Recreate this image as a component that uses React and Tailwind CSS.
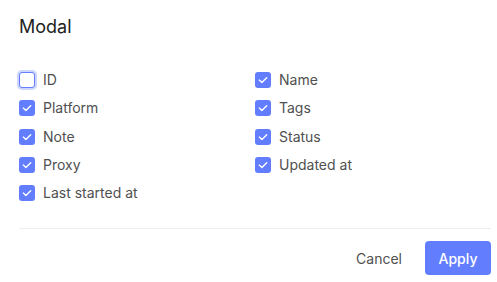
import React from "react";

const left = [
  { label: "ID", checked: false, focus: true },
  { label: "Platform", checked: true },
  { label: "Note", checked: true },
  { label: "Proxy", checked: true },
  { label: "Last started at", checked: true },
];
const right = [
  { label: "Name", checked: true },
  { label: "Tags", checked: true },
  { label: "Status", checked: true },
  { label: "Updated at", checked: true },
];

function Box({ checked, focus }) {
  if (checked) {
    return (
      <span className="flex h-4 w-4 shrink-0 items-center justify-center rounded-[3px] bg-[#627eff]">
        <svg width="10" height="8" viewBox="0 0 10 8" fill="none">
          <path d="M1.3 4.1 L3.9 6.4 L8.7 1.7" stroke="white" strokeWidth="1.4" strokeLinecap="round" strokeLinejoin="round" />
        </svg>
      </span>
    );
  }
  return (
    <span
      className={
        "h-4 w-4 shrink-0 rounded-[3px] border border-[#627eff] bg-white " +
        (focus ? "shadow-[0_0_0_2px_#cdd6ff]" : "")
      }
    />
  );
}

function Item({ label, checked, focus }) {
  return (
    <div className="flex h-[28.25px] items-center gap-2">
      <Box checked={checked} focus={focus} />
      <span className="text-[14px] leading-none text-[#505050]">{label}</span>
    </div>
  );
}

export default function App() {
  return (
    <div
      className="h-[282px] w-[497px] bg-white pl-[19px] pr-[6px] pt-[13px]"
      style={{ fontFamily: "Inter, 'Noto Sans', sans-serif" }}
    >
      <div className="text-[18px] leading-[28px] text-[#222]">Modal</div>
      <div className="mt-[25px] grid grid-cols-2">
        <div className="flex flex-col">
          {left.map((i) => (
            <Item key={i.label} {...i} />
          ))}
        </div>
        <div className="flex flex-col">
          {right.map((i) => (
            <Item key={i.label} {...i} />
          ))}
        </div>
      </div>
      <div className="mt-[21px] h-px bg-[#ececf3]" />
      <div className="mt-[12px] flex items-center justify-end gap-[12px]">
        <button className="h-[34px] px-[11px] text-[14px] text-[#505050]">Cancel</button>
        <button className="h-[34px] w-[66px] rounded-[4px] bg-[#627eff] text-[14px] font-medium text-white">
          Apply
        </button>
      </div>
    </div>
  );
}
